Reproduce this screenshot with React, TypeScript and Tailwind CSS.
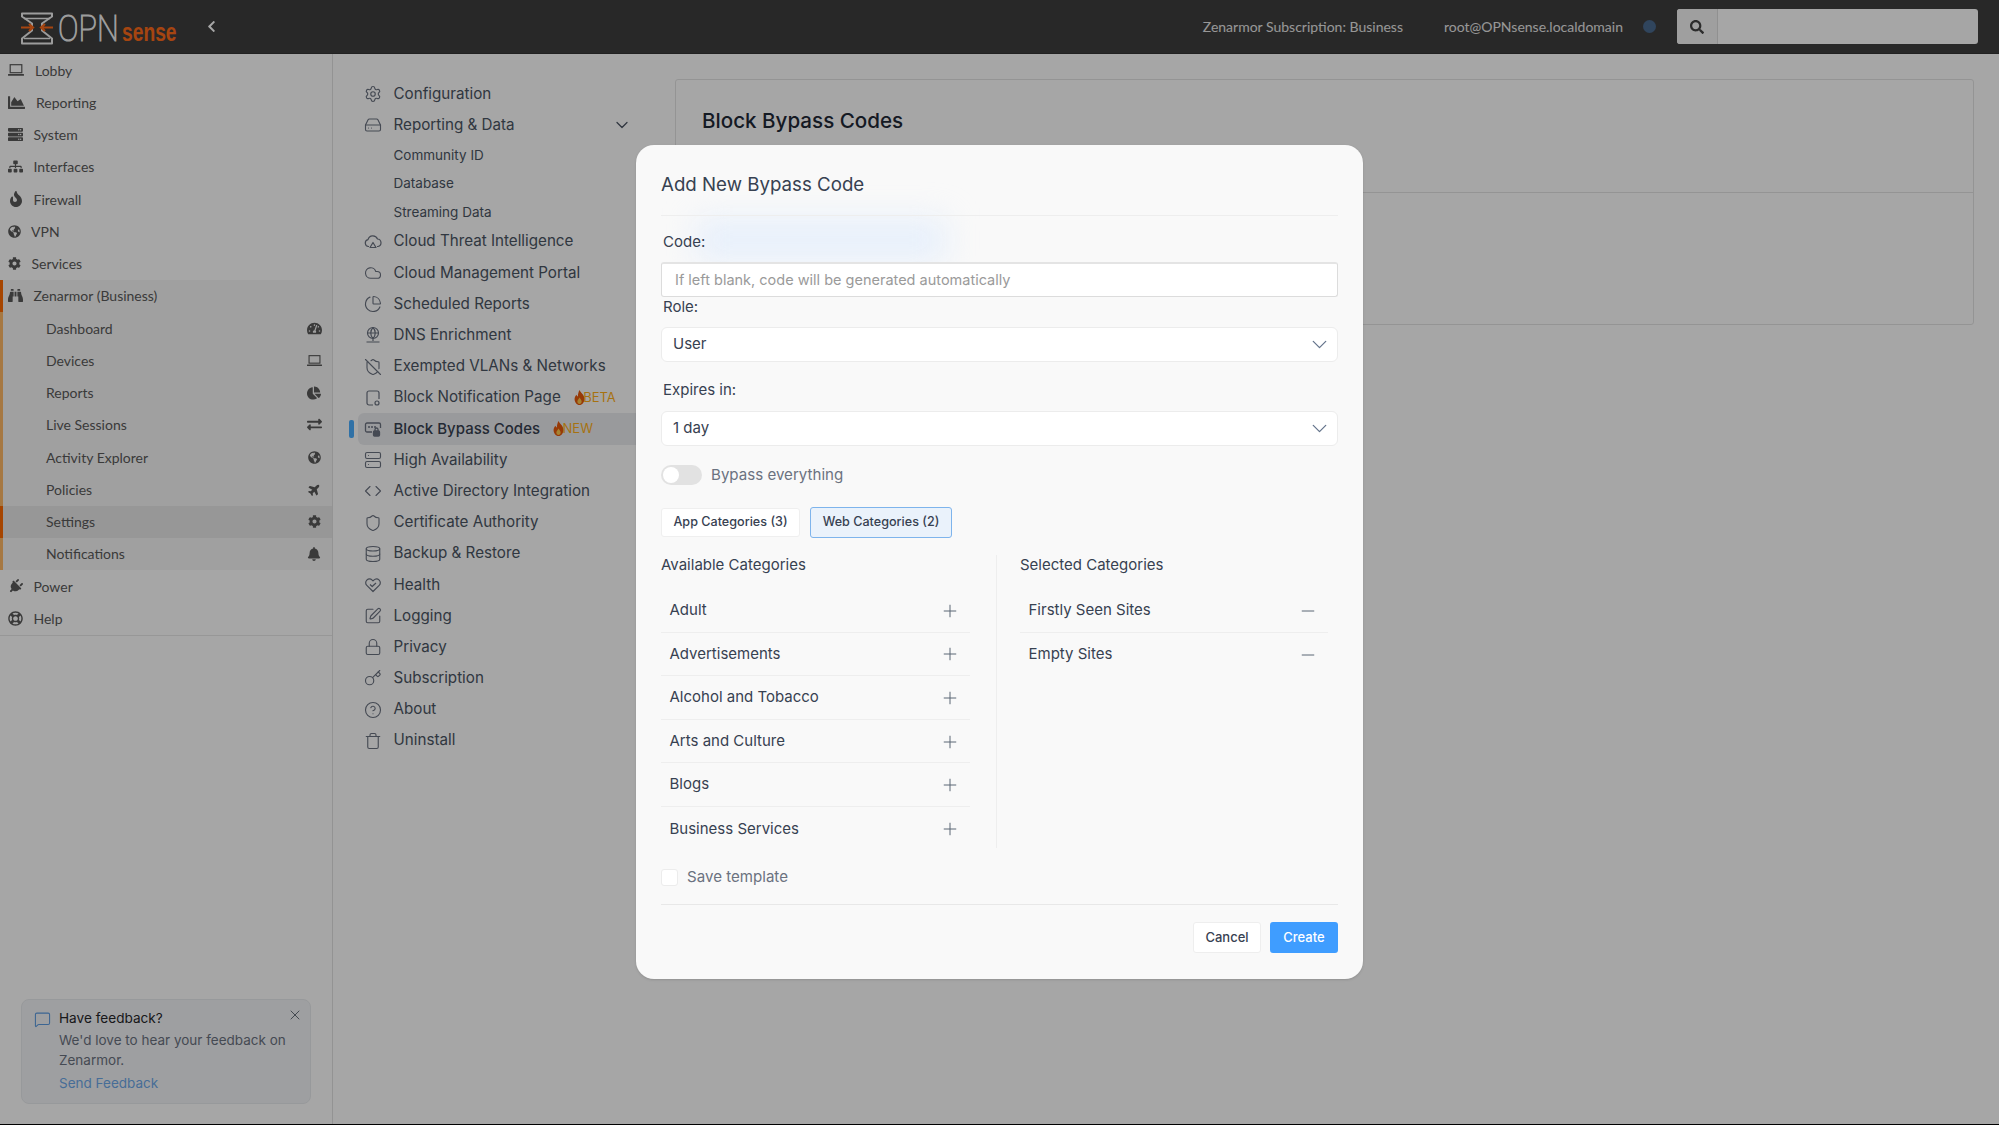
import {
  Settings, HardDrive, Cloud, PieChart, ShieldOff, Server, Code, Shield, Database,
  SquarePen, Lock, Key, CircleHelp, Trash, ChevronDown, Plus, Minus, MessageSquare, X,
} from "lucide-react";
import {
  FaChartArea, FaServer, FaSitemap, FaFire, FaGlobeAmericas, FaCog, FaBinoculars,
  FaTachometerAlt, FaChartPie, FaExchangeAlt, FaPlane, FaBell, FaPlug, FaRegLifeRing, FaSearch, FaChevronLeft,
} from "react-icons/fa";

const Logo = () => (
  <svg width="160" height="44" viewBox="0 -6.500 160 44" className="shrink-0">
    <path d="M2 2h30v3l-10 7v7l10 8v5H2v-5l10-8v-7L2 5z" fill="none" stroke="#f0f0f0" strokeWidth="2" strokeLinejoin="round" />
    <path d="M4 7h26M4 27h26" stroke="#f0f0f0" strokeWidth="1.500" />
    <path d="M1 16h11M9 12.500l4 3.500-4 3.500M33 16H22M25 12.500L21 16l4 3.500" fill="none" stroke="#ff6a1a" strokeWidth="2.200" />
    <text transform="translate(38 29) scale(0.83 1)" fontFamily="Roboto" fontWeight="100" fontSize="37" fill="#f0f0f0" stroke="#f0f0f0" strokeWidth="1">OPN</text>
    <text transform="translate(102 29.500) scale(0.74 1)" fontFamily="Liberation Sans" fontWeight="700" fontSize="26" fill="#ff6a1a">sense</text>
  </svg>
);

const Flame = () => (
  <svg width="11" height="15" viewBox="0 0 10 14" className="shrink-0">
    <path d="M5 0c.6 2 4.600 4.300 4.600 8.400C9.600 11.500 7.500 14 5 14S.4 11.500.4 8.400C.4 6.600 1.400 5.300 2.200 4.400c.3 1 .8 1.500 1.300 1.700C3.500 4 4 2 5 0z" fill="#e8590c" />
    <path d="M5 7c.4 1 2 2 2 3.800C7 12.200 6.100 13 5 13s-2-.8-2-2.200C3 9.200 4.500 8.500 5 7z" fill="#ffc94d" />
  </svg>
);

const LaptopIcon = ({ width }: { width: number }) => (
  <svg width={width} height={(width * 12) / 16} viewBox="0 0 16 12" className="shrink-0">
    <rect x="2.200" y="0.700" width="11.600" height="8" fill="none" stroke="currentColor" strokeWidth="1.200" />
    <rect x="0" y="10" width="16" height="1.800" rx="0.500" fill="currentColor" />
  </svg>
);

const DnsIcon = () => (
  <svg width="18" height="18" viewBox="0 0 18 18" fill="none" stroke="currentColor" strokeWidth="1.2">
    <circle cx="9" cy="7" r="5.500" />
    <path d="M3.500 7h11M9 1.500c-3 3-3 8 0 11M9 1.500c3 3 3 8 0 11M9 12.500V15M2.500 16h13" />
  </svg>
);

const CloudThreatIcon = () => (
  <svg width="18" height="18" viewBox="0 0 18 18" fill="none" stroke="currentColor" strokeWidth="1.2" strokeLinejoin="round">
    <path d="M5 13.500H4.500A3.500 3.500 0 0 1 4 6.600 5 5 0 0 1 13.500 6a3.800 3.800 0 0 1 .5 7.500h-1" />
    <path d="M9 9.500l3 5H6z" />
  </svg>
);

const PageIcon = () => (
  <svg width="18" height="18" viewBox="0 0 18 18" fill="none" stroke="currentColor" strokeWidth="1.2">
    <path d="M9 16H5a2 2 0 0 1-2-2V4a2 2 0 0 1 2-2h8a2 2 0 0 1 2 2v6" />
    <circle cx="13" cy="14" r="2" />
  </svg>
);

const BypassIcon = () => (
  <svg width="18" height="18" viewBox="0 0 18 18" fill="none" stroke="currentColor" strokeWidth="1.3">
    <path d="M8 12H3a1.500 1.500 0 0 1-1.500-1.500v-6A1.500 1.500 0 0 1 3 3h12a1.500 1.500 0 0 1 1.500 1.500V8" />
    <path d="M5 7h.01M8 7h.01M11 7h.01" strokeWidth="2" strokeLinecap="round" />
    <rect x="9.500" y="11" width="6" height="5" rx="1" fill="currentColor" />
    <path d="M11 11V9.500a1.500 1.500 0 0 1 3 0V11" />
  </svg>
);

const HeartCheckIcon = () => (
  <svg width="18" height="18" viewBox="0 0 18 18" fill="none" stroke="currentColor" strokeWidth="1.2" strokeLinejoin="round">
    <path d="M9 15.500 2.800 9.400a3.700 3.700 0 0 1 0-5.300 3.900 3.900 0 0 1 5.400 0l.8.800.8-.8a3.900 3.900 0 0 1 5.400 0 3.700 3.700 0 0 1 0 5.300z" />
    <path d="M6 8.500l2.200 2 3.800-3.500" />
  </svg>
);

const lucide = { size: 18, strokeWidth: 1.5 };

const sideTop = [
  { label: "Lobby", icon: <LaptopIcon width={16} />, slot: "w-[27px]" },
  { label: "Reporting", icon: <FaChartArea size={17} />, slot: "w-[28px]" },
  { label: "System", icon: <FaServer size={15} />, slot: "w-[25.5px]" },
  { label: "Interfaces", icon: <FaSitemap size={15} />, slot: "w-[25.5px]" },
  { label: "Firewall", icon: <FaFire size={16} />, slot: "w-[25.5px]" },
  { label: "VPN", icon: <FaGlobeAmericas size={13} />, slot: "w-[23px]" },
  { label: "Services", icon: <FaCog size={13} />, slot: "w-[23.5px]" },
];

const zenItems = [
  { label: "Dashboard", icon: <FaTachometerAlt size={15} /> },
  { label: "Devices", icon: <LaptopIcon width={15} /> },
  { label: "Reports", icon: <FaChartPie size={14} /> },
  { label: "Live Sessions", icon: <FaExchangeAlt size={15} /> },
  { label: "Activity Explorer", icon: <FaGlobeAmericas size={13} /> },
  { label: "Policies", icon: <FaPlane size={13} className="-rotate-45" /> },
  { label: "Settings", icon: <FaCog size={13} />, active: true },
  { label: "Notifications", icon: <FaBell size={14} /> },
];

const configNav = [
  { label: "Configuration", icon: <Settings {...lucide} /> },
  { label: "Reporting & Data", icon: <HardDrive {...lucide} />, open: true },
  { label: "Community ID", sub: true },
  { label: "Database", sub: true },
  { label: "Streaming Data", sub: true },
  { label: "Cloud Threat Intelligence", icon: <CloudThreatIcon /> },
  { label: "Cloud Management Portal", icon: <Cloud {...lucide} /> },
  { label: "Scheduled Reports", icon: <PieChart {...lucide} /> },
  { label: "DNS Enrichment", icon: <DnsIcon /> },
  { label: "Exempted VLANs & Networks", icon: <ShieldOff {...lucide} /> },
  { label: "Block Notification Page", icon: <PageIcon />, badge: "BETA" },
  { label: "Block Bypass Codes", icon: <BypassIcon />, badge: "NEW", active: true },
  { label: "High Availability", icon: <Server {...lucide} /> },
  { label: "Active Directory Integration", icon: <Code {...lucide} /> },
  { label: "Certificate Authority", icon: <Shield {...lucide} /> },
  { label: "Backup & Restore", icon: <Database {...lucide} /> },
  { label: "Health", icon: <HeartCheckIcon /> },
  { label: "Logging", icon: <SquarePen {...lucide} /> },
  { label: "Privacy", icon: <Lock {...lucide} /> },
  { label: "Subscription", icon: <Key {...lucide} /> },
  { label: "About", icon: <CircleHelp {...lucide} /> },
  { label: "Uninstall", icon: <Trash {...lucide} /> },
];

const available = ["Adult", "Advertisements", "Alcohol and Tobacco", "Arts and Culture", "Blogs", "Business Services"];
const selected = ["Firstly Seen Sites", "Empty Sites"];

const Select = ({ value, className }: { value: string; className: string }) => (
  <div className={`mx-[25px] flex h-[35px] items-center justify-between rounded-md border border-[#ececec] bg-white pl-[11px] pr-[5px] text-[15px] text-[#374151] ${className}`}>
    <span>{value}</span>
    <ChevronDown size={25} strokeWidth={1.2} className="text-[#64748b]" />
  </div>
);

const CategoryRow = ({ label, action, last }: { label: string; action: "add" | "remove"; last?: boolean }) => (
  <div className={`flex h-[43.6px] shrink-0 items-center justify-between pl-[8.5px] pr-[10px] text-[15px] text-[#374151] ${last ? "" : "border-b border-[#eeeeee]"}`}>
    <span>{label}</span>
    {action === "add" ? (
      <Plus size={20} strokeWidth={1.2} className="mt-[1px] text-[#5b6675]" />
    ) : (
      <Minus size={20} strokeWidth={1.2} className="mt-[1px] text-[#5b6675]" />
    )}
  </div>
);

export default function App() {
  return (
    <div className="relative h-[1125px] w-[1999px] overflow-hidden bg-black font-['Inter',sans-serif]">
      <div className="flex h-[1124px] flex-col bg-white">
        <header className="flex h-[54px] shrink-0 items-center border-b border-[#333] bg-[#3e3e3e] pl-[20px] font-['Lato',sans-serif] text-[14px] text-[#e8e8e8]">
          <Logo />
          <FaChevronLeft size={13} className="ml-[25px] text-white" />
          <span className="ml-auto">Zenarmor Subscription: Business</span>
          <span className="ml-[41px]">root@OPNsense.localdomain</span>
          <span className="ml-[20px] h-[13px] w-[13px] rounded-full bg-[#4a6a90]" />
          <div className="ml-[21px] mr-[21px] flex h-[35px] w-[301px] overflow-hidden rounded-[3px] bg-white">
            <div className="flex w-[41px] items-center justify-center border-r border-[#ddd] bg-[#f4f4f4] text-[#444]">
              <FaSearch size={14} />
            </div>
          </div>
        </header>

        <div className="flex min-h-0 flex-1">
          <aside className="flex w-[333px] shrink-0 flex-col border-r border-[#e2e2e2] font-['Lato',sans-serif] text-[14px] text-[#5a5a5a]">
            <div className="border-b border-[#e8e8e8]">
              {sideTop.map((item) => (
                <div key={item.label} className="flex h-[32.25px] items-center pl-[8px]">
                  <span className={`flex shrink-0 items-center ${item.slot}`}>{item.icon}</span>
                  {item.label}
                </div>
              ))}
              <div className="flex h-[32.25px] items-center border-l-[3px] border-[#ff6a00] bg-[#f6f6f6] pl-[5px]">
                <span className="flex w-[25.5px] shrink-0 items-center"><FaBinoculars size={15} /></span>
                Zenarmor (Business)
              </div>
              {zenItems.map((item) => (
                <div
                  key={item.label}
                  className={`flex h-[32.25px] items-center justify-between border-l-[3px] pl-[43px] pr-[10px] ${item.active ? "border-[#ff6a00] bg-[#e8e8e8]" : "border-[#ffb866] bg-[#f6f6f6]"}`}
                >
                  {item.label}
                  <span className="flex w-[16px] justify-center">{item.icon}</span>
                </div>
              ))}
              <div className="flex h-[32.25px] items-center pl-[8px]">
                <span className="flex w-[25.5px] shrink-0 items-center"><FaPlug size={15} className="rotate-45" /></span>
                Power
              </div>
              <div className="flex h-[32.25px] items-center pl-[8px]">
                <span className="flex w-[25.5px] shrink-0 items-center"><FaRegLifeRing size={15} /></span>
                Help
              </div>
            </div>

            <div className="mx-[21px] mb-[20px] mt-auto flex h-[105px] gap-[8px] rounded-lg border border-[#e9ebee] bg-[#f3f5f8] pl-[12px] pr-[7px] pt-[8px] font-['Inter',sans-serif]">
              <MessageSquare size={17} strokeWidth={1.5} className="mt-[3px] shrink-0 text-[#5d9be0]" />
              <div className="flex-1">
                <div className="flex items-start justify-between">
                  <span className="text-[13.6px] leading-[20px] text-[#27272a]">Have feedback?</span>
                  <X size={16} strokeWidth={1.25} className="-mt-[1px] text-[#4b5563]" />
                </div>
                <p className="mt-[1.5px] text-[13.5px] leading-[20px] text-[#6b7280]">We'd love to hear your feedback on Zenarmor.</p>
                <p className="mt-[3px] text-[13.5px] leading-[20px] text-[#6ea8e8]">Send Feedback</p>
              </div>
            </div>
          </aside>

          <nav className="w-[342px] shrink-0 pl-[16px] pr-[35px] pt-[24.4px] text-[15.2px] text-[#4b5563]">
            {configNav.map((item) =>
              item.sub ? (
                <div key={item.label} className="flex h-[28.5px] items-center pl-[44.5px] text-[13.5px]">
                  {item.label}
                </div>
              ) : (
                <div key={item.label} className="flex h-[31.2px] items-center">
                  <span className="flex w-[9px] shrink-0">
                    {item.active && <span className="h-[18px] w-[5px] rounded-[2px] bg-[#4aaeff]" />}
                  </span>
                  <div className={`flex h-full flex-1 items-center rounded-l-md pl-[6px] pr-[8px] ${item.active ? "bg-[#ecedf0] text-[15px] font-medium text-[#374151]" : ""}`}>
                    <span className="flex w-[18px] shrink-0 justify-center text-[#6b7280]">{item.icon}</span>
                    <span className="ml-[11.5px] whitespace-nowrap">{item.label}</span>
                    {item.badge && (
                      <span className="ml-[13px] flex items-center text-[13px] font-normal leading-none text-[#ffb01a]">
                        <Flame />
                        <span className="-ml-[1.5px]">{item.badge}</span>
                      </span>
                    )}
                    {item.open && <ChevronDown size={20} strokeWidth={1.5} className="ml-auto" />}
                  </div>
                </div>
              )
            )}
          </nav>

          <main className="min-w-0 flex-1 pr-[25px] pt-[25px]">
            <section className="h-[246px] rounded-[3px] border border-[#e4e4e4]">
              <div className="h-[113px] border-b border-[#e4e4e4] pl-[26px] pt-[27px] text-[20.6px] font-medium leading-[28px] text-[#1f2937]">
                Block Bypass Codes
              </div>
            </section>
          </main>
        </div>
      </div>

      {/* dim layer and modal */}
      <div className="absolute inset-0 flex items-start justify-center bg-black/35 pt-[145px]">
        <div className="relative h-[834px] w-[727px] rounded-[18px] bg-[#f9f9f9] shadow-sm">
          <div className="absolute left-[60px] top-[74px] h-[42px] w-[250px] bg-[#dbeafe]/60 blur-lg" />
          <div className="relative">
            <div className="mx-[25px] flex h-[71px] items-center border-b border-[#eeeeee] pt-[11px] text-[18.7px] text-[#374151]">
              Add New Bypass Code
            </div>
            <label className="ml-[27px] mt-[16px] block h-[20px] text-[15px] leading-[20px] text-[#374151]">Code:</label>
            <div className="mx-[25px] mt-[10px] flex h-[35px] items-center rounded-[3px] border border-[#dcdcdc] border-t-2 border-t-[#e4e4e4] bg-white pl-[13px] text-[14.5px] text-[#9a9a9a]">
              If left blank, code will be generated automatically
            </div>
            <label className="ml-[27px] block h-[20px] text-[15px] leading-[20px] text-[#374151]">Role:</label>
            <Select value="User" className="mt-[10px]" />
            <label className="ml-[27px] mt-[18px] block h-[20px] text-[15px] leading-[20px] text-[#374151]">Expires in:</label>
            <Select value="1 day" className="mt-[11px]" />

            <div className="mx-[25px] mt-[19px] flex h-[20px] items-center gap-[9px]">
              <span className="flex h-[20px] w-[41px] items-center rounded-full bg-[#e2e2e2] pl-[2px]">
                <span className="h-[16px] w-[16px] rounded-full bg-white" />
              </span>
              <span className="text-[15.1px] text-[#6b7280]">Bypass everything</span>
            </div>

            <div className="mx-[25px] mt-[22px] flex h-[31px] items-center gap-[10px] text-[12.6px] font-medium text-[#374151]">
              <span className="flex h-[29px] w-[139px] items-center justify-center rounded-[3px] border border-[#efefef] bg-white">App Categories (3)</span>
              <span className="flex h-[31px] w-[142px] items-center justify-center rounded-[3px] border border-[#7eb4ec] bg-[#eaf2fb]">Web Categories (2)</span>
            </div>

            <div className="mx-[25px] mt-[17px] flex h-[293px]">
              <div className="flex w-[309px] shrink-0 flex-col">
                <h3 className="h-[20px] text-[15px] font-normal leading-[20px] text-[#374151]">Available Categories</h3>
                <div className="mt-[14px]">
                  {available.map((name, i) => (
                    <CategoryRow key={name} label={name} action="add" last={i === available.length - 1} />
                  ))}
                </div>
              </div>
              <div className="ml-[26px] w-px shrink-0 bg-[#eeeeee]" />
              <div className="ml-[23px] flex w-[308px] shrink-0 flex-col">
                <h3 className="h-[20px] text-[15px] font-normal leading-[20px] text-[#374151]">Selected Categories</h3>
                <div className="mt-[14px]">
                  {selected.map((name, i) => (
                    <CategoryRow key={name} label={name} action="remove" last={i === selected.length - 1} />
                  ))}
                </div>
              </div>
            </div>

            <div className="mx-[25px] mt-[21px] flex h-[17px] items-center gap-[9px]">
              <span className="h-[17px] w-[17px] rounded-[3px] border border-[#ececec] bg-white" />
              <span className="text-[15.1px] text-[#6b7280]">Save template</span>
            </div>

            <div className="mx-[25px] mt-[18px] border-t border-[#e8e8e8]" />

            <div className="mx-[25px] mt-[17px] flex h-[31px] justify-end gap-[9px] text-[13px] font-medium">
              <button className="w-[68px] rounded-[3px] border border-[#eeeeee] bg-white text-[#374151]">Cancel</button>
              <button className="w-[68px] rounded-[3px] bg-[#3f9dff] text-white">Create</button>
            </div>
          </div>
        </div>
      </div>
    </div>
  );
}
